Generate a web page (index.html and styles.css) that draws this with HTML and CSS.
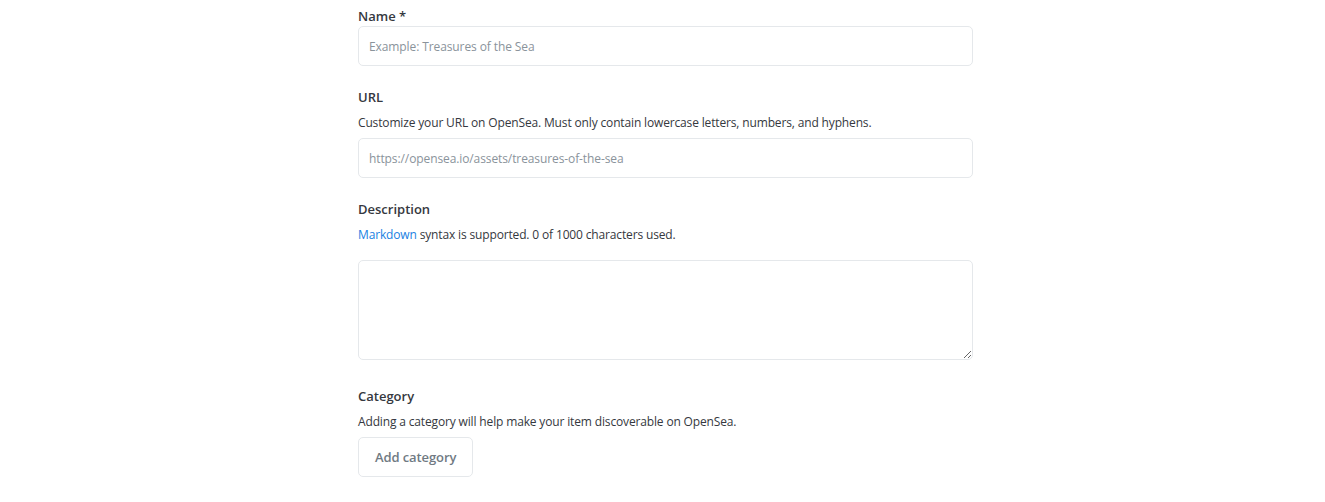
FILE: index.html
```html
<!DOCTYPE html>
<html>
<head>
<meta charset="utf-8">
<link rel="stylesheet" href="styles.css">
</head>
<body>
<div class="page">
  <form class="form">
    <div class="field">
      <label class="label">Name *</label>
      <input class="input" type="text" placeholder="Example: Treasures of the Sea">
    </div>
    <div class="field">
      <label class="label">URL</label>
      <p class="help">Customize your URL on OpenSea. Must only contain lowercase letters, numbers, and hyphens.</p>
      <input class="input" type="text" placeholder="https://opensea.io/assets/treasures-of-the-sea">
    </div>
    <div class="field">
      <label class="label">Description</label>
      <p class="help"><a class="link" href="#">Markdown</a> syntax is supported. 0 of 1000 characters used.</p>
      <textarea class="textarea"></textarea>
    </div>
    <div class="field">
      <label class="label">Category</label>
      <p class="help">Adding a category will help make your item discoverable on OpenSea.</p>
      <button class="button" type="button">Add category</button>
    </div>
  </form>
</div>
</body>
</html>
```

FILE: styles.css
```css
* { box-sizing: border-box; }
html, body { margin: 0; padding: 0; background: #fff; }
body {
  font-family: "Open Sans", "Noto Sans", sans-serif;
  color: #353840;
}
.page {
  display: flex;
  justify-content: center;
  padding: 7px 0 0 6px;
}
.form {
  width: 615px;
  display: flex;
  flex-direction: column;
  gap: 22px;
}
.field {
  display: flex;
  flex-direction: column;
}
.label {
  font-size: 13px;
  font-weight: 600;
  line-height: 19px;
  color: #353840;
}
.help {
  margin: 8px 0 0;
  font-size: 12px;
  line-height: 16px;
  letter-spacing: -0.15px;
  color: #353840;
}
.link { color: #2081e2; text-decoration: none; }
.input, .textarea {
  font-family: inherit;
  width: 100%;
  border: 1px solid #e5e8eb;
  border-radius: 5px;
  padding: 0 10px;
  font-size: 12px;
  letter-spacing: -0.1px;
  color: #353840;
  outline: none;
  margin: 0;
}
.input { height: 40px; }
.help + .input { margin-top: 7px; }
.input::placeholder { color: #8a939b; }
.textarea { height: 100px; resize: vertical; margin: 17px 0 5px; }
.button {
  align-self: flex-start;
  height: 40px;
  margin-top: 7px;
  padding: 0 16px;
  background: #fff;
  border: 1px solid #e5e8eb;
  border-radius: 5px;
  font-family: inherit;
  font-size: 13px;
  font-weight: 600;
  letter-spacing: -0.1px;
  color: #707a83;
}
```
